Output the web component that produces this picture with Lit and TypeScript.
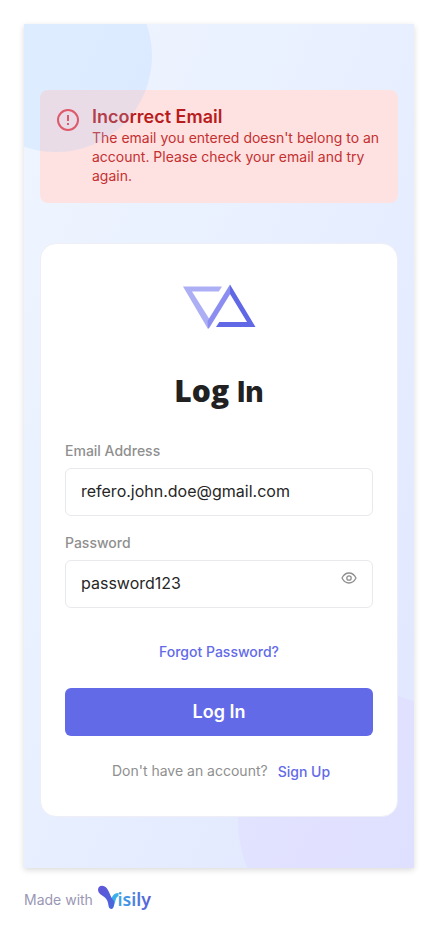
import { LitElement, html, css, svg } from "lit";
import { customElement } from "lit/decorators.js";

@customElement("brand-mark")
class BrandMark extends LitElement {
  static styles = css`
    :host { display: block; height: 46px; width: 76px; }
    svg { display: block; }
  `;
  render() {
    return html`<svg width="76" height="46" viewBox="0 0 76 46">
      <path d="M1 2.500H40L36.800 7.500H10L27 34.500L26 45Z" fill="#adaff5" />
      <path d="M48 .5L48.500 9.500L27.500 43.500L26 45L25.500 37Z" fill="#8b8ef0" />
      <path d="M48 .5L73.500 43H34L37.300 38H65L48 10Z" fill="#6168e6" />
    </svg>`;
  }
}

@customElement("app-root")
class AppRoot extends LitElement {
  static styles = css`
    * { box-sizing: border-box; }
    :host {
      display: block;
      box-sizing: border-box;
      height: 932px;
      padding: 24px 24px 0;
      overflow: hidden;
      background: #fff;
      font-family: Inter, "Liberation Sans", sans-serif;
    }
    .screen {
      position: relative;
      width: 390px;
      height: 844px;
      padding: 66px 16px 0;
      background: linear-gradient(to bottom right, #eff6ff, #e0e7ff);
      box-shadow: 0 2px 6px rgba(0, 0, 0, 0.15);
    }
    .clip { position: absolute; inset: 0; overflow: hidden; pointer-events: none; }
    .blob { position: absolute; border-radius: 50%; }
    .blob.sky { width: 192px; height: 192px; left: -64px; top: -64px; background: rgba(154, 201, 255, 0.2); }
    .blob.violet { width: 256px; height: 256px; right: -80px; bottom: -80px; background: rgba(221, 208, 254, 0.3); }
    .alert {
      display: flex;
      gap: 12px;
      height: 113px;
      padding: 17px 16px;
      border-radius: 8px;
      background: #fee2e2;
      color: #b91c1c;
    }
    .alert svg { flex: none; margin-top: 1px; }
    .alert h2 { margin: 0; font-size: 18px; line-height: 20px; font-weight: 600; }
    .alert p { margin: 1px 0 0; font-size: 14px; line-height: 19px; color: #c53030; white-space: nowrap; }
    .card {
      position: relative;
      display: flex;
      flex-direction: column;
      height: 574px;
      margin-top: 40px;
      padding: 40px 24px 0;
      border: 1px solid #eeeff6;
      border-radius: 16px;
      background: #fff;
    }
    brand-mark { margin-left: 117px; }
    h1 {
      height: 44px;
      margin: 39px 0 0;
      font-family: "Open Sans", sans-serif;
      font-size: 30px;
      line-height: 44px;
      font-weight: 800;
      color: #212121;
      text-align: center;
    }
    h1 span { font-family: Inter, sans-serif; font-size: 29px; line-height: 1; }
    label { display: block; font-size: 14px; line-height: 20px; font-weight: 500; color: #8f8f8f; }
    .field {
      display: flex;
      align-items: center;
      justify-content: space-between;
      height: 48px;
      margin-top: 7px;
      padding: 0 15px 2px;
      border: 1px solid #e8e9ec;
      border-radius: 6px;
      font-size: 16px;
      color: #262626;
    }
    .first { margin-top: 28px; }
    .second { margin-top: 17px; }
    .field svg { margin-bottom: 10px; }
    a { color: #636ae8; font-size: 14px; line-height: 20px; font-weight: 500; text-decoration: none; }
    .forgot { margin-top: 34px; text-align: center; }
    button {
      height: 48px;
      margin: 26px 0 0;
      border: 0;
      border-radius: 6px;
      background: #636ae8;
      color: #fff;
      font: 600 18px/28px Inter, sans-serif;
    }
    .signup { display: flex; justify-content: center; gap: 10px; margin-top: 25px; padding-left: 4px; font-size: 14px; line-height: 20px; color: #8f8f8f; }
    .signup a { padding-top: 1px; }
    footer { display: flex; align-items: flex-start; gap: 4px; margin-top: 17px; font-size: 14px; line-height: 30px; color: #9a97b5; }
  `;

  private eye = svg`<g fill="none" stroke="#8f8f8f" stroke-width="1.300">
    <path d="M1 6C2.700 2.700 5.100 1 8 1s5.300 1.700 7 5c-1.700 3.300-4.100 5-7 5S2.700 9.300 1 6z" stroke-linejoin="round"/>
    <circle cx="8" cy="6" r="2.200"/></g>`;

  render() {
    return html`
      <main class="screen">
        <section class="alert">
          <svg width="24" height="24" viewBox="0 0 24 24" fill="none" stroke="#ef3f45" stroke-width="2">
            <circle cx="12" cy="12" r="10" /><path d="M12 7v6M12 15v2" />
          </svg>
          <div>
            <h2>Incorrect Email</h2>
            <p>The email you entered doesn't belong to an<br />account. Please check your email and try<br />again.</p>
          </div>
        </section>
        <div class="clip"><div class="blob sky"></div><div class="blob violet"></div></div>
        <section class="card">
          <brand-mark></brand-mark>
          <h1>Log <span>In</span></h1>
          <label class="first">Email Address</label>
          <div class="field">refero.john.doe@gmail.com</div>
          <label class="second">Password</label>
          <div class="field">password123<svg width="16" height="12" viewBox="0 0 16 12">${this.eye}</svg></div>
          <a class="forgot">Forgot Password?</a>
          <button>Log In</button>
          <div class="signup"><span>Don't have an account?</span><a>Sign Up</a></div>
        </section>
      </main>
      <footer>
        <span>Made with</span>
        <svg width="58" height="30" viewBox="0 0 58 30">
          <defs>
            <linearGradient id="v" x1="0" y1="0" x2="1" y2="1"><stop offset="0" stop-color="#6355d8" /><stop offset="1" stop-color="#4668dc" /></linearGradient>
            <linearGradient id="t" x1="0" y1="0" x2="1" y2="0"><stop offset="0" stop-color="#3ba8e8" /><stop offset="1" stop-color="#5b5bd8" /></linearGradient>
          </defs>
          <path d="M14 19C14 12 16 8 21.500 8V11C18 12 18.500 19 16 23Z" fill="#3aaeea" />
          <path d="M1 5C1 0 7-.5 10 3.500C12.500 7 14 13 17 16C17.500 19 16.500 24 14.500 24C12 24 11.500 21 11 18C10 13 7 12 3 9Q1 7 1 5Z" fill="url(#v)" />
          <text x="20.500" y="20.500" font-family="Noto Sans" font-size="18" font-weight="600" textLength="33.500" lengthAdjust="spacingAndGlyphs" fill="url(#t)">isily</text>
        </svg>
      </footer>
    `;
  }
}
